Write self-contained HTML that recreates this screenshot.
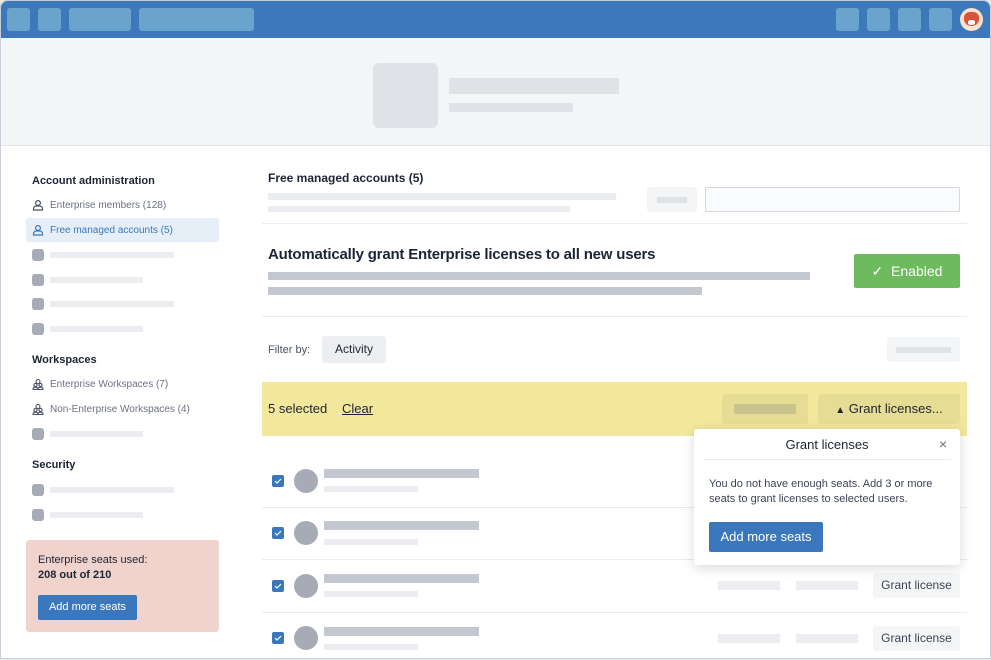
<!DOCTYPE html>
<html><head><meta charset="utf-8"><style>
*{box-sizing:border-box;margin:0;padding:0}
body{width:991px;height:660px;background:#e6e8ec;font-family:"Liberation Sans",sans-serif;position:relative;overflow:hidden;color:#1d2433}
.a{position:absolute}
.frame{left:0;top:0;width:991px;height:659px;background:#fff;border-radius:8px 8px 0 0;overflow:hidden}
.bord{left:0;top:0;width:991px;height:659px;border:1px solid #c9ced8;border-radius:8px 8px 0 0;pointer-events:none}
.top{left:0;top:0;width:991px;height:38px;background:#3d78bb}
.tb{background:#6aa3cc;border-radius:3px;top:8px;height:23px}
.hdr{left:0;top:38px;width:991px;height:108px;background:#f4f5f7;border-bottom:1px solid #e1e4e9}
.g1{background:#e1e2e7}
.sk{background:#ecedf0}
.skd{background:#c3c7cf}
.sq{background:#a6abb6;border-radius:3px;width:12px;height:12px}
.t{white-space:nowrap}
.nav{font-size:10px;color:#6b7180}
.h{font-size:11px;font-weight:bold;color:#1d2433}
.btn{background:#3b77bc;color:#fff;border-radius:2px;text-align:center}
.ln{background:#e8eaee;height:1px}
.cb{width:12px;height:12px;background:#3b77bc;border-radius:2px}
.av{width:24px;height:24px;border-radius:50%;background:#a6abb6}
.gl{background:#f4f5f7;border-radius:3px;font-size:12px;color:#3d4452;text-align:center;line-height:25px;width:87px;height:25px}
</style></head><body>
<div class="a frame">
<div class="a top"></div>
<div class="a tb" style="left:7px;width:23px"></div>
<div class="a tb" style="left:38px;width:23px"></div>
<div class="a tb" style="left:69px;width:62px"></div>
<div class="a tb" style="left:139px;width:115px"></div>
<div class="a tb" style="left:836px;width:23px"></div>
<div class="a tb" style="left:867px;width:23px"></div>
<div class="a tb" style="left:898px;width:23px"></div>
<div class="a tb" style="left:929px;width:23px"></div>
<div class="a" style="left:960px;top:8px;width:23px;height:23px;border-radius:50%;background:#fbe3d0"></div>
<div class="a" style="left:964px;top:12px;width:15px;height:14px;border-radius:40% 40% 50% 50%;background:#d9533a"></div>
<div class="a" style="left:968px;top:20px;width:7px;height:5px;border-radius:40%;background:#fff"></div>

<div class="a hdr"></div>
<div class="a g1" style="left:373px;top:63px;width:65px;height:65px;border-radius:6px"></div>
<div class="a g1" style="left:449px;top:78px;width:170px;height:16px"></div>
<div class="a g1" style="left:449px;top:103px;width:124px;height:9px"></div>

<div class="a t h" style="left:32px;top:175px">Account administration</div>
<svg class="a" style="left:32px;top:199px" width="12" height="12" viewBox="0 0 12 12" fill="none" stroke="#4b5263" stroke-width="1.2"><circle cx="6" cy="4" r="2.4"/><path d="M1.5 11v-1.2c0-1.6 1.3-2.8 2.8-2.8h3.4c1.6 0 2.8 1.3 2.8 2.8V11z"/></svg>
<div class="a t nav" style="left:50px;top:200px">Enterprise members (128)</div>
<div class="a" style="left:26px;top:218px;width:193px;height:24px;background:#e6eff7;border-radius:3px"></div>
<svg class="a" style="left:32px;top:224px" width="12" height="12" viewBox="0 0 12 12" fill="none" stroke="#3b77bc" stroke-width="1.2"><circle cx="6" cy="4" r="2.4"/><path d="M1.5 11v-1.2c0-1.6 1.3-2.8 2.8-2.8h3.4c1.6 0 2.8 1.3 2.8 2.8V11z"/></svg>
<div class="a t nav" style="left:50px;top:225px;color:#3b77bc">Free managed accounts (5)</div>
<div class="a sq" style="left:32px;top:249px"></div><div class="a sk" style="left:50px;top:252px;width:124px;height:6px"></div>
<div class="a sq" style="left:32px;top:274px"></div><div class="a sk" style="left:50px;top:277px;width:93px;height:6px"></div>
<div class="a sq" style="left:32px;top:298px"></div><div class="a sk" style="left:50px;top:301px;width:124px;height:6px"></div>
<div class="a sq" style="left:32px;top:323px"></div><div class="a sk" style="left:50px;top:326px;width:93px;height:6px"></div>
<div class="a t h" style="left:32px;top:354px">Workspaces</div>
<svg class="a" style="left:32px;top:378px" width="12" height="12" viewBox="0 0 12 12" fill="none" stroke="#4b5263" stroke-width="1.1"><circle cx="6" cy="3.5" r="2"/><circle cx="3.5" cy="7" r="1.6"/><circle cx="8.5" cy="7" r="1.6"/><path d="M1 11.5c0-1.5 1-2.3 2.5-2.3s2.5.8 2.5 2.3zM6 11.5c0-1.5 1-2.3 2.5-2.3s2.5.8 2.5 2.3z"/></svg>
<div class="a t nav" style="left:50px;top:379px">Enterprise Workspaces (7)</div>
<svg class="a" style="left:32px;top:403px" width="12" height="12" viewBox="0 0 12 12" fill="none" stroke="#4b5263" stroke-width="1.1"><circle cx="6" cy="3.5" r="2"/><circle cx="3.5" cy="7" r="1.6"/><circle cx="8.5" cy="7" r="1.6"/><path d="M1 11.5c0-1.5 1-2.3 2.5-2.3s2.5.8 2.5 2.3zM6 11.5c0-1.5 1-2.3 2.5-2.3s2.5.8 2.5 2.3z"/></svg>
<div class="a t nav" style="left:50px;top:404px">Non-Enterprise Workspaces (4)</div>
<div class="a sq" style="left:32px;top:428px"></div><div class="a sk" style="left:50px;top:431px;width:93px;height:6px"></div>
<div class="a t h" style="left:32px;top:459px">Security</div>
<div class="a sq" style="left:32px;top:484px"></div><div class="a sk" style="left:50px;top:487px;width:124px;height:6px"></div>
<div class="a sq" style="left:32px;top:509px"></div><div class="a sk" style="left:50px;top:512px;width:93px;height:6px"></div>
<div class="a" style="left:26px;top:540px;width:193px;height:92px;background:#f0d3cd;border-radius:3px"></div>
<div class="a t" style="left:38px;top:554px;font-size:11px;color:#1d2433">Enterprise seats used:</div>
<div class="a t" style="left:38px;top:569px;font-size:11px;font-weight:bold">208 out of 210</div>
<div class="a btn t" style="left:38px;top:595px;width:99px;height:25px;font-size:11px;line-height:25px">Add more seats</div>

<div class="a t" style="left:268px;top:171px;font-size:12px;font-weight:bold;color:#1d2433">Free managed accounts (5)</div>
<div class="a sk" style="left:268px;top:193px;width:348px;height:7px"></div>
<div class="a sk" style="left:268px;top:206px;width:302px;height:6px"></div>
<div class="a" style="left:647px;top:187px;width:50px;height:25px;background:#f4f5f7;border-radius:3px"></div>
<div class="a" style="left:657px;top:197px;width:30px;height:6px;background:#e1e2e7"></div>
<div class="a" style="left:705px;top:187px;width:255px;height:25px;border:1px solid #d5d8de;border-radius:2px;background:#fafbfc"></div>
<div class="a ln" style="left:262px;top:223px;width:705px"></div>
<div class="a t" style="left:268px;top:246px;font-size:15px;font-weight:bold;color:#1d2433;letter-spacing:-.2px">Automatically grant Enterprise licenses to all new users</div>
<div class="a skd" style="left:268px;top:272px;width:542px;height:8px"></div>
<div class="a skd" style="left:268px;top:287px;width:434px;height:8px"></div>
<div class="a t" style="left:854px;top:254px;width:106px;height:34px;background:#6ebb5d;border-radius:2px;color:#fff;font-size:14px;line-height:34px;text-align:center">✓&nbsp; Enabled</div>
<div class="a ln" style="left:262px;top:316px;width:705px"></div>
<div class="a t" style="left:268px;top:344px;font-size:11px;color:#4b5263">Filter by:</div>
<div class="a" style="left:322px;top:336px;width:64px;height:27px;background:#eceef1;border-radius:3px;font-size:12px;line-height:27px;text-align:center;color:#1d2433">Activity</div>
<div class="a" style="left:887px;top:337px;width:73px;height:25px;background:#f4f5f7;border-radius:3px"></div>
<div class="a" style="left:896px;top:347px;width:55px;height:6px;background:#e1e2e7"></div>

<div class="a" style="left:262px;top:382px;width:705px;height:54px;background:#f2e79b"></div>
<div class="a t" style="left:268px;top:401px;font-size:13px;color:#1d2433">5 selected</div>
<div class="a t" style="left:342px;top:401px;font-size:13px;color:#1d2433;text-decoration:underline">Clear</div>
<div class="a" style="left:722px;top:394px;width:86px;height:30px;background:#e7dc93;border-radius:3px"></div>
<div class="a" style="left:734px;top:404px;width:62px;height:10px;background:#c9c38e"></div>
<div class="a t" style="left:818px;top:394px;width:142px;height:30px;background:#e7dc93;border-radius:3px;font-size:13px;line-height:30px;text-align:center;color:#1d2433"><span style="font-size:10px">▲</span> Grant licenses...</div>

<div class="a cb" style="left:272px;top:475px"></div><div class="a av" style="left:294px;top:469px"></div>
<div class="a skd" style="left:324px;top:469px;width:155px;height:9px"></div><div class="a sk" style="left:324px;top:486px;width:94px;height:6px"></div>
<div class="a ln" style="left:262px;top:507px;width:705px"></div>
<div class="a cb" style="left:272px;top:527px"></div><div class="a av" style="left:294px;top:521px"></div>
<div class="a skd" style="left:324px;top:521px;width:155px;height:9px"></div><div class="a sk" style="left:324px;top:539px;width:94px;height:6px"></div>
<div class="a ln" style="left:262px;top:559px;width:705px"></div>
<div class="a cb" style="left:272px;top:580px"></div><div class="a av" style="left:294px;top:574px"></div>
<div class="a skd" style="left:324px;top:574px;width:155px;height:9px"></div><div class="a sk" style="left:324px;top:591px;width:94px;height:6px"></div>
<div class="a sk" style="left:718px;top:581px;width:62px;height:9px"></div><div class="a sk" style="left:796px;top:581px;width:62px;height:9px"></div>
<div class="a gl t" style="left:873px;top:573px">Grant license</div>
<div class="a ln" style="left:262px;top:612px;width:705px"></div>
<div class="a cb" style="left:272px;top:632px"></div><div class="a av" style="left:294px;top:626px"></div>
<div class="a skd" style="left:324px;top:627px;width:155px;height:9px"></div><div class="a sk" style="left:324px;top:644px;width:94px;height:6px"></div>
<div class="a sk" style="left:718px;top:634px;width:62px;height:9px"></div><div class="a sk" style="left:796px;top:634px;width:62px;height:9px"></div>
<div class="a gl t" style="left:873px;top:626px">Grant license</div>

<div class="a" style="left:694px;top:429px;width:266px;height:136px;background:#fff;border-radius:3px;box-shadow:0 3px 12px rgba(0,0,0,.15)"></div>
<div class="a t" style="left:694px;top:437px;width:266px;text-align:center;font-size:13px;color:#1d2433">Grant licenses</div>
<div class="a t" style="left:939px;top:436px;font-size:14px;color:#6b7180">×</div>
<div class="a ln" style="left:703px;top:459px;width:248px"></div>
<div class="a" style="left:709px;top:477px;width:240px;font-size:11px;line-height:15px;color:#3d4452">You do not have enough seats. Add 3 or more seats to grant licenses to selected users.</div>
<div class="a btn t" style="left:709px;top:522px;width:114px;height:30px;font-size:13px;line-height:30px">Add more seats</div>
</div>
<div class="a bord"></div>
<svg class="a" style="left:274px;top:477px" width="8" height="8" viewBox="0 0 8 8"><path d="M1 4l2 2 4-4" fill="none" stroke="#fff" stroke-width="1.2"/></svg>
<svg class="a" style="left:274px;top:529px" width="8" height="8" viewBox="0 0 8 8"><path d="M1 4l2 2 4-4" fill="none" stroke="#fff" stroke-width="1.2"/></svg>
<svg class="a" style="left:274px;top:582px" width="8" height="8" viewBox="0 0 8 8"><path d="M1 4l2 2 4-4" fill="none" stroke="#fff" stroke-width="1.2"/></svg>
<svg class="a" style="left:274px;top:634px" width="8" height="8" viewBox="0 0 8 8"><path d="M1 4l2 2 4-4" fill="none" stroke="#fff" stroke-width="1.2"/></svg>
</body></html>
